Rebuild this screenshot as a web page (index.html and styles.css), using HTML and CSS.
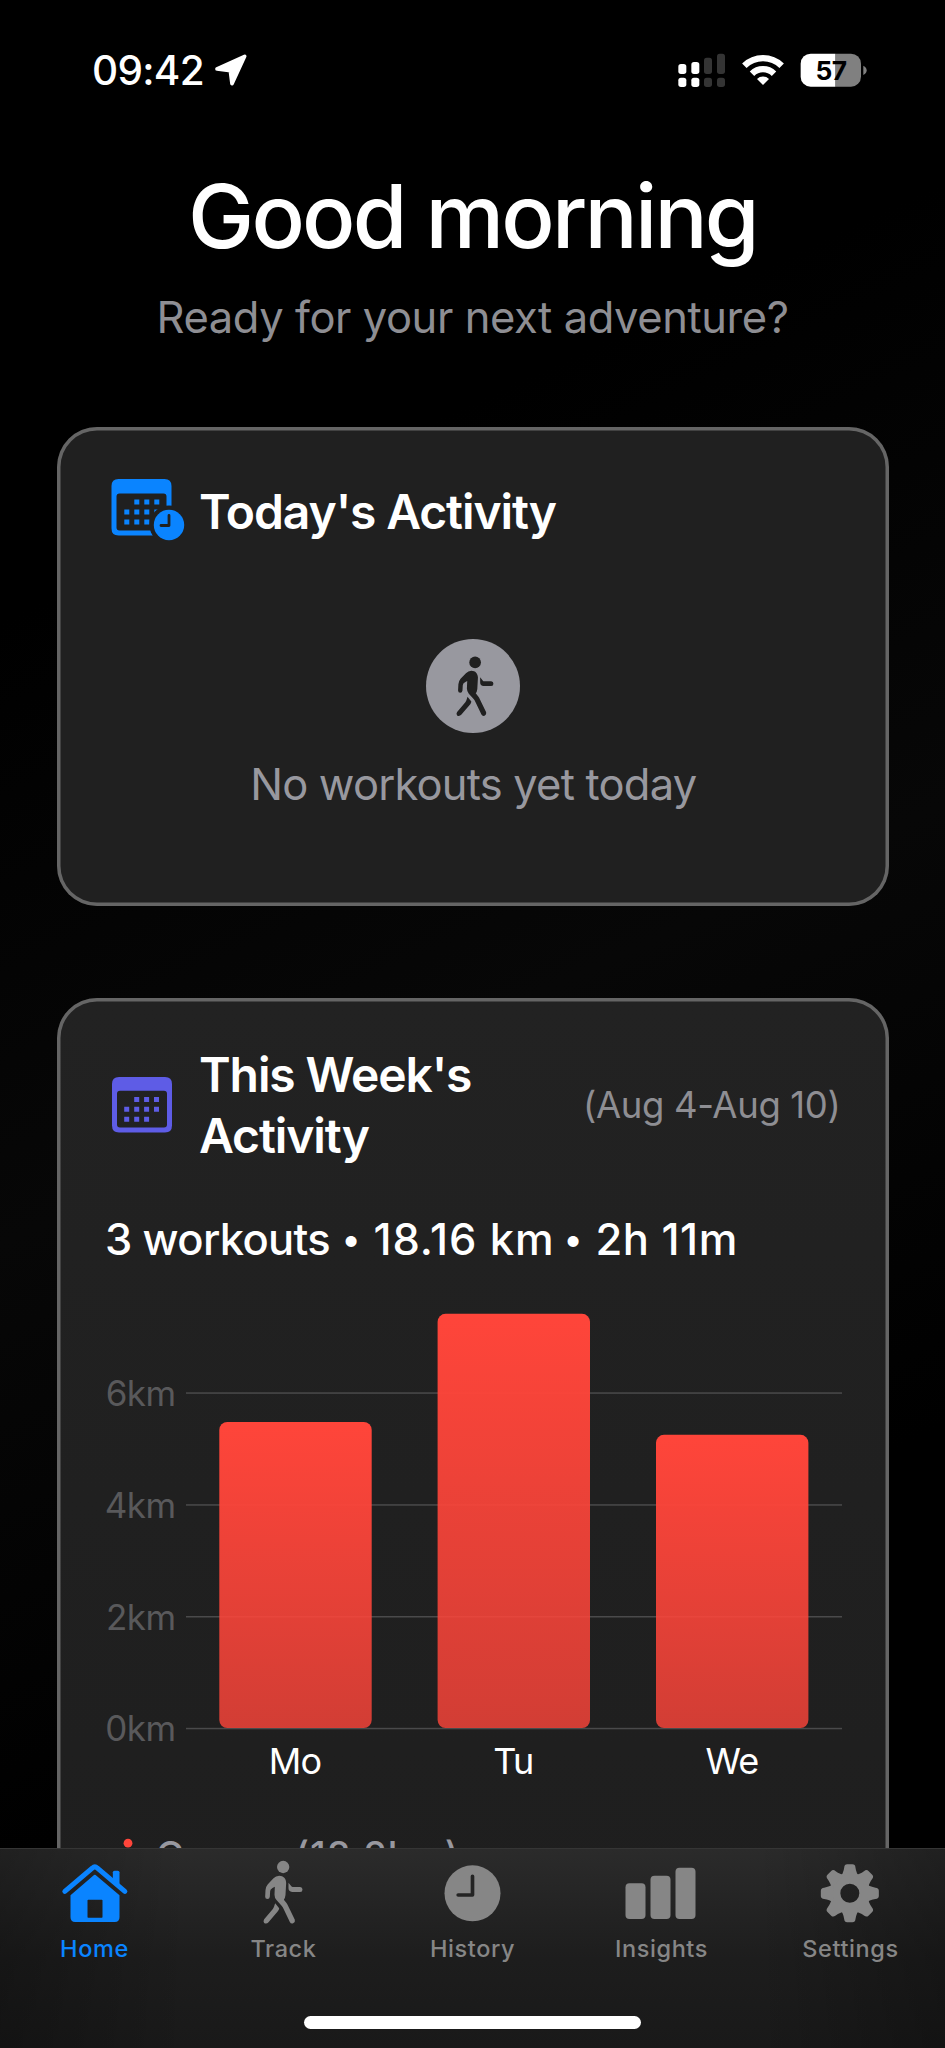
FILE: index.html
```html
<!DOCTYPE html>
<html lang="en">
<head>
<meta charset="utf-8">
<title>Good morning</title>
<link rel="stylesheet" href="styles.css">
</head>
<body>
<svg width="0" height="0" class="defs" aria-hidden="true">
  <symbol id="walker" viewBox="610.5 168 240 216">
    <circle cx="728" cy="201" r="18.5"/>
    <path d="M716 227C729 227 737 236 737 249L735 285Q734 294 730 299L738 309Q741 313 743 318L763 359Q765 366 758 370Q751 372 748 366L729 326Q727 322 724 318L708 300Q702 293 702 284L703 260L696 264Q689 268 689 273L688 290Q687 297 681 297Q674 297 674 290L675 270Q676 260 682 253L699 235Q706 227 716 227Z"/>
    <path d="M704 310L716 325Q716 330 712 334L684 367Q678 373 671 369Q667 364 671 358L697 327Q700 323 701 319Z"/>
    <path d="M744 248L752 258Q754 261 757 261L779 261Q786 262 786 268.500Q786 276 779 276L755 276Q744 275 744 265Z"/>
  </symbol>
</svg>
<div class="screen">
  <main class="content">
    <div class="status">
      <div class="clock">09:42
        <svg class="arrow" width="34" height="34" viewBox="466 71 102 102"><path d="M475 119L558 81L520 163L515 124Z" fill="#fff" stroke="#fff" stroke-width="11" stroke-linejoin="round"/></svg>
      </div>
      <svg class="indicators" width="192" height="40" viewBox="110 60 576 120">
        <g fill="#fff">
          <rect x="114" y="102" width="24" height="30" rx="8"/><rect x="153" y="96" width="24" height="36" rx="8"/>
          <rect x="114" y="143" width="24" height="28" rx="8"/><rect x="153" y="143" width="24" height="28" rx="8"/>
        </g>
        <g fill="#343434">
          <rect x="191" y="83" width="24" height="49" rx="8"/><rect x="230" y="71" width="24" height="61" rx="8"/>
          <rect x="191" y="143" width="24" height="28" rx="8"/><rect x="230" y="143" width="24" height="28" rx="8"/>
        </g>
        <g fill="none" stroke="#fff" stroke-width="19"><path d="M312 107A80 80 0 0 1 424 107"/><path d="M335 131A47 47 0 0 1 401 131"/></g>
        <path d="M368 165L350 147A26 26 0 0 1 386 147Z" fill="#fff"/>
        <path d="M585 71H632A30 30 0 0 1 662 101V140A30 30 0 0 1 632 170H585Z" fill="#808080"/>
        <path d="M585 71H511A30 30 0 0 0 481 101V140A30 30 0 0 0 511 170H585Z" fill="#fff"/>
        <path d="M669 107Q679 112 679 121T669 135Z" fill="#808080"/>
        <text x="572" y="151" class="battery">57</text>
      </svg>
    </div>
    <header class="greeting">
      <h1>Good morning</h1>
      <p>Ready for your next adventure?</p>
    </header>

    <section class="card today">
      <div class="card-head">
        <svg class="card-icon" width="94" height="64" viewBox="0 0 94 64">
          <defs><mask id="cut"><rect y="-4" width="95" height="68" fill="#fff"/><circle cx="64" cy="45" r="19.500" fill="#000"/></mask></defs>
          <g mask="url(#cut)" fill="#0a84ff">
            <path fill-rule="evenodd" d="M13.500-1H59.500Q66.500-1 66.500 6V48.500Q66.500 55.500 59.500 55.500H13.500Q6.500 55.500 6.500 48.500V6Q6.500-1 13.500-1ZM14.500 13.500Q11.500 13.500 11.500 16.500V47.500Q11.500 50.500 14.500 50.500H58.500Q61.500 50.500 61.500 47.500V16.500Q61.500 13.500 58.500 13.500Z"/>
            <path d="M29.300 19.500h5v5h-5zM39.300 19.500h5v5h-5zM49.300 19.500h5v5h-5zM19.300 29.500h5v5h-5zM29.300 29.500h5v5h-5zM39.300 29.500h5v5h-5zM49.300 29.500h5v5h-5zM19.300 39.500h5v5h-5zM29.300 39.500h5v5h-5zM39.300 39.500h5v5h-5z"/>
          </g>
          <circle cx="64" cy="45" r="15.200" fill="#0a84ff"/>
          <path d="M64 35.500V45.500H56" fill="none" stroke="#202020" stroke-width="2.800" stroke-linecap="round" stroke-linejoin="round"/>
        </svg>
        <h2>Today's Activity</h2>
      </div>
      <div class="empty">
        <div class="badge"><svg width="75.800" height="68.200"><use href="#walker"/></svg></div>
        <p>No workouts yet today</p>
      </div>
    </section>

    <section class="card week">
      <div class="card-head">
        <svg class="card-icon" width="94" height="64" viewBox="0 0 94 64" fill="#5e5ce6">
          <path fill-rule="evenodd" d="M14 4H60Q67 4 67 11V52.500Q67 59.500 60 59.500H14Q7 59.500 7 52.500V11Q7 4 14 4ZM15 17.800Q12 17.800 12 20.800V51.500Q12 54.500 15 54.500H59Q62 54.500 62 51.500V20.800Q62 17.800 59 17.800Z"/>
          <path d="M29.200 24h5v5h-5zM39.100 24h5v5h-5zM49 24h5v5h-5zM19.200 33.800h5v5h-5zM29.200 33.800h5v5h-5zM39.100 33.800h5v5h-5zM49 33.800h5v5h-5zM19.200 43.700h5v5h-5zM29.200 43.700h5v5h-5zM39.100 43.700h5v5h-5z"/>
        </svg>
        <h2>This Week's Activity</h2>
        <span class="range">(Aug 4-Aug 10)</span>
      </div>
      <p class="stats"><span class="count">3 workouts</span><span class="dot">•</span><span class="distance">18.16 km</span><span class="dot">•</span><span class="time">2h 11m</span></p>
      <svg class="chart" width="737" height="490" viewBox="105 1300 737 490">
        <defs><linearGradient id="bar" x1="0" y1="0" x2="0" y2="1"><stop offset="0" stop-color="#ff453a"/><stop offset="1" stop-color="#ff453a" stop-opacity=".8"/></linearGradient></defs>
        <g fill="#4a4a4b">
          <rect x="186" y="1392.300" width="656" height="1.500"/><rect x="186" y="1504.200" width="656" height="1.500"/>
          <rect x="186" y="1616" width="656" height="1.500"/><rect x="186" y="1727.800" width="656" height="1.500"/>
        </g>
        <g class="y-axis"><text x="175.500" y="1406">6km</text><text x="175.500" y="1518">4km</text><text x="175.500" y="1629.500">2km</text><text x="175.500" y="1741">0km</text></g>
        <g fill="url(#bar)">
          <rect x="219.300" y="1422" width="152.400" height="306" rx="8"/>
          <rect x="437.600" y="1313.800" width="152.400" height="414.200" rx="8"/>
          <rect x="656" y="1434.800" width="152.400" height="293.200" rx="8"/>
        </g>
        <g class="x-axis"><text x="295" y="1774">Mo</text><text x="513.300" y="1774">Tu</text><text x="732" y="1774">We</text></g>
      </svg>
      <div class="legend">
        <svg width="46" height="46"><circle cx="23" cy="11.200" r="4.400" fill="#ff453a"/></svg>
        <span class="kind">Course</span><span class="sum">(18.2km)</span>
      </div>
    </section>
  </main>

  <nav class="tabs">
    <a class="tab active">
      <svg width="80" height="72" viewBox="43.500 168 240 216">
        <path d="M217 245V217Q217 212 222 212H232Q237 212 237 217V262Z"/>
        <path d="M73 274L156 204Q163 197 170 204L253 274" fill="none" stroke="currentColor" stroke-width="15" stroke-linecap="round"/>
        <path fill-rule="evenodd" d="M158 227Q163 222 168 227L237 286V352Q237 366 223 366H104Q90 366 90 352V286ZM143 299Q141 299 141 301V351Q141 353 143 353H184Q186 353 186 351V301Q186 299 184 299Z"/>
      </svg><span>Home</span>
    </a>
    <a class="tab"><svg width="80" height="72"><use href="#walker"/></svg><span>Track</span></a>
    <a class="tab">
      <svg width="80" height="72" viewBox="1177.500 168 240 216"><circle cx="1296" cy="280" r="84"/><path d="M1296 229V285H1253" fill="none" stroke="#242424" stroke-width="11" stroke-linecap="round" stroke-linejoin="round"/></svg><span>History</span>
    </a>
    <a class="tab">
      <svg width="80" height="72" viewBox="424.500 468 240 216"><rect x="435" y="550" width="60" height="107" rx="12"/><rect x="510" y="527" width="60" height="130" rx="12"/><rect x="585" y="503" width="60" height="154" rx="12"/></svg><span>Insights</span>
    </a>
    <a class="tab">
      <svg width="80" height="72" viewBox="991.500 468 240 216">
        <defs><path id="tooth" d="M1082 530L1087 518Q1090 511 1091 503Q1092 493 1100 493H1116Q1124 493 1125 503Q1126 511 1129 518L1134 530Z"/></defs>
        <circle cx="1108" cy="580" r="45" fill="none" stroke="currentColor" stroke-width="33"/>
        <use href="#tooth"/><use href="#tooth" transform="rotate(45 1108 580)"/><use href="#tooth" transform="rotate(90 1108 580)"/><use href="#tooth" transform="rotate(135 1108 580)"/><use href="#tooth" transform="rotate(180 1108 580)"/><use href="#tooth" transform="rotate(225 1108 580)"/><use href="#tooth" transform="rotate(270 1108 580)"/><use href="#tooth" transform="rotate(315 1108 580)"/>
      </svg><span>Settings</span>
    </a>
    <div class="home-bar"></div>
  </nav>
</div>
</body>
</html>
```
FILE: styles.css
```css
* { box-sizing: border-box; }
body { margin: 0; background: #000; font-family: Inter, "Liberation Sans", sans-serif; color: #fff; }
h1, h2, p { margin: 0; }
.defs { display: block; position: absolute; }
.screen { width: 945px; height: 2048px; display: flex; flex-direction: column; overflow: hidden; background: linear-gradient(155deg, #000 25%, #070707 50%, #000 75%); }
.content { height: 1848px; flex: none; overflow: hidden; }

.status { height: 140px; padding: 0 76px 0 92px; display: flex; align-items: center; justify-content: space-between; }
.clock { display: flex; align-items: center; gap: 10px; font-size: 40.5px; font-weight: 550; letter-spacing: -0.7px; }
.battery { font-size: 79px; font-weight: 700; text-anchor: middle; fill: #000; letter-spacing: -2px; }

.greeting { padding-top: 26px; height: 287px; text-align: center; }
.greeting h1 { font-size: 88.5px; line-height: 100px; font-weight: 550; letter-spacing: -2.8px; }
.greeting p { margin-top: 21px; font-size: 43.5px; line-height: 60px; color: #8e8e93; letter-spacing: -0.43px; }

.card { width: 831.500px; margin-left: 57px; padding: 52px 47px 0 48px; border-radius: 40px; background: #202020; box-shadow: inset 0 0 0 3.5px #656565; }
.card-head { display: flex; align-items: center; }
.card-icon { flex: none; overflow: visible; }
.card h2 { font-size: 48px; line-height: 61px; font-weight: 590; letter-spacing: -1.1px; }

.today { height: 479px; }
.today .card-icon { margin-top: 1px; margin-bottom: -1px; }
.empty { margin-top: 96px; display: flex; flex-direction: column; align-items: center; gap: 22px; }
.badge { width: 94px; height: 94px; border-radius: 50%; background: #98989f; display: flex; align-items: center; justify-content: center; }
.badge svg { fill: #202020; margin-left: 5px; }
.empty p { font-size: 43.5px; line-height: 60px; margin-top: -1px; color: #98989f; letter-spacing: -0.8px; }

.week { margin-top: 92px; height: 1000px; padding-top: 46px; background: linear-gradient(#222, #1e1e1e); }
.week h2 { width: 340px; }
.range { margin-left: auto; padding-right: 1px; font-size: 36.5px; color: #8e8e93; letter-spacing: -0.35px; white-space: nowrap; }
.stats { margin-top: 43px; display: flex; font-size: 43.5px; line-height: 60px; font-weight: 500; white-space: nowrap; }
.count { width: 223.500px; letter-spacing: -0.65px; }
.dot { width: 45px; text-align: center; font-size: 35px; }
.distance { width: 177px; letter-spacing: 0.9px; }
.time { letter-spacing: 0.5px; }
.chart { display: block; margin-top: 31px; overflow: visible; }
.y-axis { font-size: 35px; fill: #59595b; text-anchor: end; letter-spacing: -0.6px; }
.x-axis { font-size: 36px; fill: #fff; text-anchor: middle; letter-spacing: -0.9px; }
.legend { margin-top: 42px; display: flex; line-height: 46px; font-size: 38px; font-weight: 500; color: #98989f; }
.kind { width: 144px; padding-left: 5px; }
.sum { letter-spacing: 1px; }

.tabs { height: 200px; flex: none; display: grid; grid-template-columns: repeat(5, 189px); align-content: start; padding-top: 7px; border-top: 1px solid #353535; background: linear-gradient(90deg, rgba(0,0,0,.25), rgba(0,0,0,0) 20%, rgba(0,0,0,0) 80%, rgba(0,0,0,.25)), linear-gradient(#2b2b2b, #1d1d1d 55%, #191919); color: #868686; }
.tab { display: flex; flex-direction: column; align-items: center; font-size: 23.5px; line-height: 41px; font-weight: 450; letter-spacing: 0.6px; }
.tab svg { fill: currentColor; }
.active { color: #0a84ff; }
.home-bar { grid-column: 1 / -1; justify-self: center; width: 337px; height: 13px; margin-top: 47px; border-radius: 7px; background: #fff; }
```
